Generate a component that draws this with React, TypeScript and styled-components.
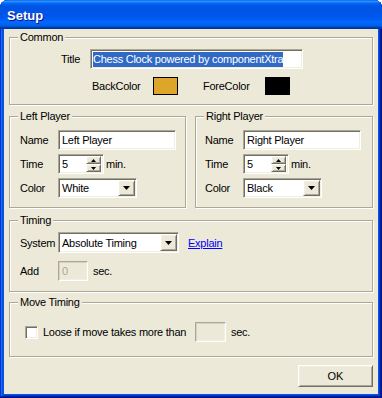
import styled, { createGlobalStyle } from "styled-components";

const GlobalStyle = createGlobalStyle`
  html, body {
    margin: 0;
    padding: 0;
    background: #ffffff;
  }
  body {
    font-family: "Liberation Sans", Arial, sans-serif;
    font-size: 11px;
    color: #000;
  }
  * {
    box-sizing: border-box;
  }
`;

const Window = styled.div`
  width: 382px;
  height: 398px;
  display: flex;
  flex-direction: column;
  background: #0855dd;
  border-radius: 8px 8px 0 0;
  overflow: hidden;
  box-shadow: inset -1px -1px #00138c, inset 1px 1px #0831d9,
    inset -2px -2px #001ea0, inset 2px 2px #166aee, inset -3px -3px #003bda,
    inset 3px 3px #0855dd;
`;

const TitleBar = styled.div`
  flex: none;
  height: 29px;
  display: flex;
  align-items: center;
  padding: 1px 0 0 7px;
  color: #fff;
  font: bold 13px "Liberation Sans", Arial, sans-serif;
  text-shadow: 1px 1px #0f1089;
  background: linear-gradient(
    180deg,
    #0058ee 0%,
    #3593ff 4%,
    #288eff 6%,
    #127dff 8%,
    #036ffc 10%,
    #0262ee 14%,
    #0057e5 20%,
    #0054e3 24%,
    #0055eb 56%,
    #005bf5 66%,
    #026afe 76%,
    #0062ef 86%,
    #0052d6 92%,
    #0040ab 94%,
    #003092 100%
  );
`;

const Body = styled.div`
  flex: 1;
  margin: 0 4px 4px;
  padding: 0 5px 7px;
  background: #ece9d8;
  display: flex;
  flex-direction: column;
  letter-spacing: -0.25px;
`;

const Group = styled.div<{ $top: number; $bottom: number; $pl?: number; $w?: number }>`
  margin-top: ${(p) => p.$top}px;
  padding: 0 10px ${(p) => p.$bottom}px ${(p) => p.$pl ?? 10}px;
  border: 1px solid #aca899;
  box-shadow: inset 1px 1px #fff, 1px 1px #fff;
  ${(p) => (p.$w ? `width: ${p.$w}px; flex: none;` : "flex: 1;")}
`;

const Caption = styled.div<{ $pl?: number }>`
  width: fit-content;
  margin: -7px 0 0 ${(p) => 8 - (p.$pl ?? 10)}px;
  padding: 0 2px;
  line-height: 13px;
  background: #ece9d8;
`;

const PlayersRow = styled.div`
  display: flex;
  gap: 9px;
  margin-top: 11px;
`;

const Row = styled.div<{ $mt: number; $pl?: number; $h?: number }>`
  display: flex;
  align-items: center;
  height: ${(p) => p.$h ?? 20}px;
  margin-top: ${(p) => p.$mt}px;
  padding-left: ${(p) => p.$pl ?? 0}px;
`;

const Label = styled.span<{ $w?: number; $right?: boolean; $ml?: number }>`
  flex: none;
  white-space: nowrap;
  ${(p) => (p.$w ? `width: ${p.$w}px;` : "")}
  text-align: ${(p) => (p.$right ? "right" : "left")};
  margin-left: ${(p) => p.$ml ?? 0}px;
`;

const Edit = styled.div<{ $w: number; $h?: number; $ml?: number; $disabled?: boolean }>`
  flex: none;
  width: ${(p) => p.$w}px;
  height: ${(p) => p.$h ?? 20}px;
  margin-left: ${(p) => p.$ml ?? 0}px;
  display: flex;
  align-items: center;
  padding: 0 1px;
  white-space: nowrap;
  overflow: hidden;
  border: 1px solid;
  border-color: #aca899 #fff #fff #aca899;
  box-shadow: ${(p) =>
    p.$disabled
      ? "inset 1px 1px #d4d0c8, inset -1px -1px #f1efe2"
      : "inset 1px 1px #716f64, inset -1px -1px #f1efe2"};
  background: ${(p) => (p.$disabled ? "#ece9d8" : "#fff")};
  color: ${(p) => (p.$disabled ? "#aca899" : "#000")};
`;

const EditText = styled.span`
  flex: 1;
  padding-left: 2px;
`;

const Selected = styled.span`
  background: #316ac5;
  color: #fff;
  line-height: 15px;
  margin-left: 1px;
`;

const Raised = styled.div<{ $w: number; $h: number }>`
  flex: none;
  width: ${(p) => p.$w}px;
  height: ${(p) => p.$h}px;
  display: flex;
  align-items: center;
  justify-content: center;
  background: #ece9d8;
  border: 1px solid;
  border-color: #fff #716f64 #716f64 #fff;
  box-shadow: inset 1px 1px #f1efe2, inset -1px -1px #aca899;
`;

const SpinStack = styled.div`
  display: flex;
  flex-direction: column;
  margin-right: 1px;
`;

const Swatch = styled.div<{ $color: string }>`
  flex: none;
  width: 25px;
  height: 18px;
  border: 1px solid #000;
  background: ${(p) => p.$color};
`;

const Link = styled.a`
  margin-left: 9px;
  color: #0000ff;
  text-decoration: underline;
  cursor: pointer;
`;

const CheckBox = styled.div`
  flex: none;
  width: 13px;
  height: 13px;
  border: 1px solid;
  border-color: #aca899 #fff #fff #aca899;
  box-shadow: inset 1px 1px #716f64, inset -1px -1px #f1efe2;
  background: #fff;
`;

const Footer = styled.div`
  display: flex;
  justify-content: flex-end;
  margin-top: 8px;
`;

const OkButton = styled.button`
  width: 75px;
  height: 22px;
  padding: 0;
  font: 11px "Liberation Sans", Arial, sans-serif;
  color: #000;
  background: #ece9d8;
  border: 1px solid;
  border-color: #fff #716f64 #716f64 #fff;
  box-shadow: inset 1px 1px #f1efe2, inset -1px -1px #aca899;
`;

const Arrow = ({ up, small }: { up?: boolean; small?: boolean }) => {
  const w = small ? 5 : 7;
  const h = small ? 3 : 4;
  const pts = up ? `0,${h} ${w / 2},0 ${w},${h}` : `0,0 ${w},0 ${w / 2},${h}`;
  return (
    <svg width={w} height={h} viewBox={`0 0 ${w} ${h}`} style={{ display: "block" }}>
      <polygon points={pts} fill="#000" />
    </svg>
  );
};

const Combo = ({ w, h = 20, value }: { w: number; h?: number; value: string }) => (
  <Edit $w={w} $h={h}>
    <EditText>{value}</EditText>
    <Raised $w={17} $h={h - 4}>
      <Arrow />
    </Raised>
  </Edit>
);

const Spin = ({ value }: { value: string }) => (
  <Edit $w={46} $h={20}>
    <EditText>{value}</EditText>
    <SpinStack>
      <Raised $w={15} $h={8}>
        <Arrow up small />
      </Raised>
      <Raised $w={15} $h={8}>
        <Arrow small />
      </Raised>
    </SpinStack>
  </Edit>
);

const PlayerGroup = ({
  title,
  name,
  color,
  width,
  pl,
}: {
  title: string;
  name: string;
  color: string;
  width?: number;
  pl?: number;
}) => (
  <Group $top={0} $bottom={9} $w={width} $pl={pl}>
    <Caption $pl={pl}>{title}</Caption>
    <Row $mt={7}>
      <Label $w={38}>Name</Label>
      <Edit $w={118}>
        <EditText>{name}</EditText>
      </Edit>
    </Row>
    <Row $mt={4}>
      <Label $w={38}>Time</Label>
      <Spin value="5" />
      <Label $ml={2}>min.</Label>
    </Row>
    <Row $mt={4}>
      <Label $w={38}>Color</Label>
      <Combo w={79} value={color} />
    </Row>
  </Group>
);

export default function App() {
  return (
    <>
      <GlobalStyle />
      <Window>
        <TitleBar>Setup</TitleBar>
        <Body>
          <Group $top={8} $bottom={9}>
            <Caption>Common</Caption>
            <Row $mt={5}>
              <Label $w={60} $right>
                Title
              </Label>
              <Edit $w={213} $ml={10}>
                <Selected>Chess Clock powered by componentXtra</Selected>
              </Edit>
            </Row>
            <Row $mt={8} $h={18} $pl={72}>
              <Label $w={61}>BackColor</Label>
              <Swatch $color="#dda529" />
              <Label $w={62} $ml={25}>
                ForeColor
              </Label>
              <Swatch $color="#000000" />
            </Row>
          </Group>

          <PlayersRow>
            <PlayerGroup title="Left Player" name="Left Player" color="White" width={177} />
            <PlayerGroup title="Right Player" name="Right Player" color="Black" pl={9} />
          </PlayersRow>

          <Group $top={12} $bottom={10}>
            <Caption>Timing</Caption>
            <Row $mt={5} $h={21}>
              <Label $w={38}>System</Label>
              <Combo w={121} h={21} value="Absolute Timing" />
              <Link>Explain</Link>
            </Row>
            <Row $mt={8}>
              <Label $w={38}>Add</Label>
              <Edit $w={30} $disabled>
                <EditText>0</EditText>
              </Edit>
              <Label $ml={5}>sec.</Label>
            </Row>
          </Group>

          <Group $top={10} $bottom={14}>
            <Caption>Move Timing</Caption>
            <Row $mt={13} $pl={5}>
              <CheckBox />
              <Label $w={152} $ml={5}>
                Loose if move takes more than
              </Label>
              <Edit $w={31} $disabled />
              <Label $ml={5}>sec.</Label>
            </Row>
          </Group>

          <Footer>
            <OkButton>OK</OkButton>
          </Footer>
        </Body>
      </Window>
    </>
  );
}
